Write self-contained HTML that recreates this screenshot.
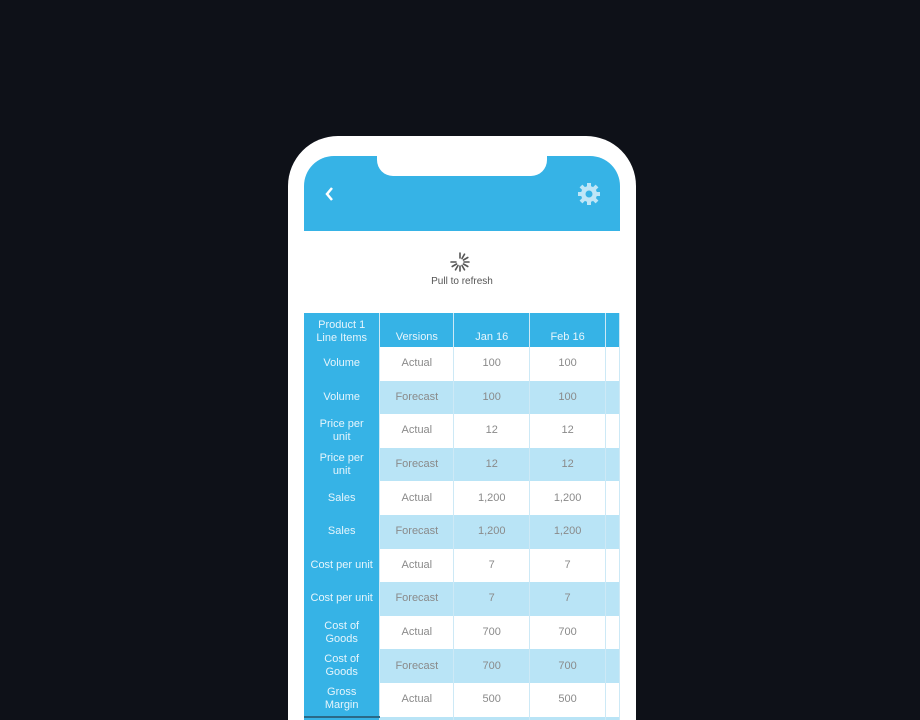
<html style="overflow:hidden;width:920px;height:720px"><head><style>
body{margin:0;width:920px;height:720px;background:#0e1118;position:relative;overflow:hidden;font-family:"Liberation Sans",sans-serif}
.ph{position:absolute;left:288px;top:136px;width:348px;height:584px;background:#fff;border-radius:50px 50px 0 0}
.sc{position:absolute;left:304px;top:156px;width:316px;height:564px;background:#fff;border-radius:30px 30px 0 0;overflow:hidden}
.hd{position:absolute;left:0;top:0;width:316px;height:75px;background:#36b3e6}
.notch{position:absolute;left:73px;top:0;width:170px;height:20px;background:#fff;border-radius:0 0 16px 16px}
table{position:absolute;left:0;top:157px;border-collapse:collapse;table-layout:fixed;font-size:11px}
td{height:33.6px;padding:0;text-align:center;color:#8a8a8a;border-right:1px solid #cde9f6;line-height:13px}
td:first-child{background:#36b3e6;color:#e6f5fc}
tr.f td{background:#b9e4f6}
tr.f td:first-child{background:#36b3e6}
tr.h td{background:#36b3e6;color:#e6f5fc;height:34px}
</style></head><body>
<div class="ph"></div>
<div class="sc">
<div class="hd"><div class="notch"></div>
<svg style="position:absolute;left:20px;top:30px" width="12" height="16"><path d="M8 2 L3 8 L8 14" stroke="#fff" stroke-width="2.5" fill="none"/></svg>
<svg style="position:absolute;left:273px;top:26px" width="24" height="24" viewBox="0 0 24 24"><g fill="#bfe6f7"><circle cx="12" cy="12" r="8"/><g stroke="#bfe6f7" stroke-width="4"><line x1="12" y1="1" x2="12" y2="23"/><line x1="1" y1="12" x2="23" y2="12"/><line x1="4" y1="4" x2="20" y2="20"/><line x1="20" y1="4" x2="4" y2="20"/></g></g><circle cx="12" cy="12" r="3.5" fill="#36b3e6"/></svg>
</div>
<svg style="position:absolute;left:145px;top:95px" width="22" height="22" viewBox="-11 -11 22 22"><g stroke="#555" stroke-width="1.6" stroke-linecap="round"><line x1="0" y1="-4" x2="0" y2="-9" transform="rotate(0)"/><line x1="0" y1="-4" x2="0" y2="-9" transform="rotate(30)"/><line x1="0" y1="-4" x2="0" y2="-9" transform="rotate(60)"/><line x1="0" y1="-4" x2="0" y2="-9" transform="rotate(90)"/><line x1="0" y1="-4" x2="0" y2="-9" transform="rotate(120)"/><line x1="0" y1="-4" x2="0" y2="-9" transform="rotate(150)"/><line x1="0" y1="-4" x2="0" y2="-9" transform="rotate(180)"/><line x1="0" y1="-4" x2="0" y2="-9" transform="rotate(210)"/><line x1="0" y1="-4" x2="0" y2="-9" transform="rotate(240)"/><line x1="0" y1="-4" x2="0" y2="-9" transform="rotate(270)"/></g></svg>
<div style="position:absolute;left:0;width:316px;top:120px;text-align:center;font-size:10px;color:#555">Pull to refresh</div>
<table>
<colgroup><col style="width:76px"><col style="width:74px"><col style="width:76px"><col style="width:76px"><col style="width:14px"></colgroup>
<tr class="h"><td style="padding-top:3px">Product 1<br>Line Items</td><td style="padding-top:14px">Versions</td><td style="padding-top:14px">Jan 16</td><td style="padding-top:14px">Feb 16</td><td></td></tr>
<tr><td>Volume</td><td>Actual</td><td>100</td><td>100</td><td></td></tr>
<tr class="f"><td>Volume</td><td>Forecast</td><td>100</td><td>100</td><td></td></tr>
<tr><td>Price per<br>unit</td><td>Actual</td><td>12</td><td>12</td><td></td></tr>
<tr class="f"><td>Price per<br>unit</td><td>Forecast</td><td>12</td><td>12</td><td></td></tr>
<tr><td>Sales</td><td>Actual</td><td>1,200</td><td>1,200</td><td></td></tr>
<tr class="f"><td>Sales</td><td>Forecast</td><td>1,200</td><td>1,200</td><td></td></tr>
<tr><td>Cost per unit</td><td>Actual</td><td>7</td><td>7</td><td></td></tr>
<tr class="f"><td>Cost per unit</td><td>Forecast</td><td>7</td><td>7</td><td></td></tr>
<tr><td>Cost of<br>Goods</td><td>Actual</td><td>700</td><td>700</td><td></td></tr>
<tr class="f"><td>Cost of<br>Goods</td><td>Forecast</td><td>700</td><td>700</td><td></td></tr>
<tr><td>Gross<br>Margin</td><td>Actual</td><td>500</td><td>500</td><td></td></tr>
<tr class="f"><td style="border-top:2px solid #2a6a88"></td><td></td><td></td><td></td><td></td></tr>
</table>
</div>
</body></html>
